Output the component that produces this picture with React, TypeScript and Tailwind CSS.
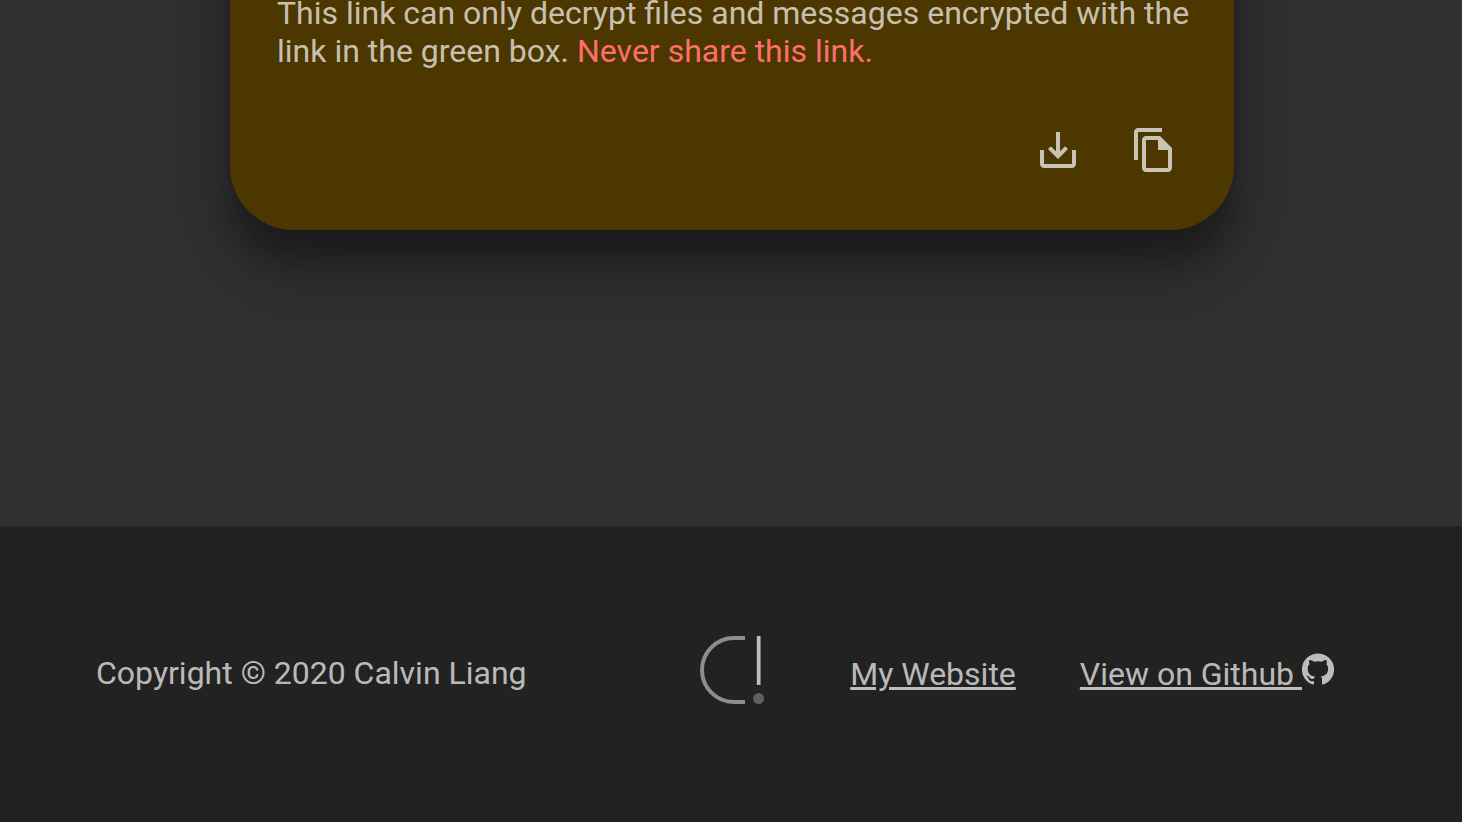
import React from "react";

function SaveIcon() {
  return (
    <svg viewBox="0 0 24 24" className="size-12 fill-current" aria-hidden="true">
      <path d="M19 12v7H5v-7H3v7c0 1.1.9 2 2 2h14c1.1 0 2-.9 2-2v-7h-2zm-6 .67l2.59-2.58L17 11.5l-5 5-5-5 1.41-1.41L11 12.67V3h2z" />
    </svg>
  );
}

function CopyIcon() {
  return (
    <svg viewBox="0 0 24 24" className="size-12 fill-current" aria-hidden="true">
      <path d="M16 1H4c-1.1 0-2 .9-2 2v14h2V3h12V1zm-1 4H8c-1.1 0-1.99.9-1.99 2L6 21c0 1.1.89 2 1.99 2H19c1.1 0 2-.9 2-2V11l-6-6zM8 21V7h6v5h5v9H8z" />
    </svg>
  );
}

function GithubIcon() {
  return (
    <svg viewBox="0 0 24 24" className="inline-block size-8 fill-current align-baseline" aria-hidden="true">
      <path d="M12 .3a12 12 0 0 0-3.8 23.4c.6.1.8-.3.8-.6v-2c-3.3.7-4-1.6-4-1.6-.6-1.4-1.4-1.8-1.4-1.8-1-.7.1-.7.1-.7 1.2 0 1.9 1.2 1.9 1.2 1 1.8 2.8 1.3 3.5 1 0-.8.4-1.3.7-1.6-2.7-.3-5.5-1.3-5.5-6 0-1.2.5-2.3 1.3-3.1-.2-.4-.6-1.6 0-3.2 0 0 1-.3 3.4 1.2a11.5 11.5 0 0 1 6 0c2.3-1.5 3.3-1.2 3.3-1.2.6 1.6.2 2.8 0 3.2.9.8 1.3 1.9 1.3 3.2 0 4.6-2.8 5.6-5.5 5.9.5.4.9 1 .9 2.2v3.3c0 .3.1.7.8.6A12 12 0 0 0 12 .3" />
    </svg>
  );
}

function Logo() {
  return (
    <svg viewBox="0 0 64 68" className="h-[68px] w-16" fill="none" aria-hidden="true">
      <path d="M45 2H34a32 32 0 0 0 0 64H45" stroke="#8e8e8e" strokeWidth="4" />
      <path d="M58.7 0V49" stroke="#bdbdbd" strokeWidth="3.7" />
      <circle cx="58.6" cy="62.5" r="5.5" fill="#5f5f5f" />
    </svg>
  );
}

export default function App() {
  return (
    <div className="flex min-h-screen flex-col overflow-hidden bg-[#303030] font-[Roboto,sans-serif] text-[32px] leading-[38px] text-white/70">
      <main className="pb-[296px] pl-0.5">
        <section className="mx-auto -mt-48 max-w-[1004px] rounded-[64px] bg-[#4c3700] pt-[186px] pb-8 shadow-[0_38px_76px_rgba(0,0,0,0.3),0_30px_24px_rgba(0,0,0,0.22)]">
          <p className="pr-10 pl-[47px]">
            This link can only decrypt files and messages encrypted with the link in the green box.{" "}
            <span className="text-[#ff6e6e]">Never share this link.</span>
          </p>
          <div className="mt-8 flex justify-end px-8">
            <button type="button" aria-label="Download link" className="rounded-full p-6">
              <SaveIcon />
            </button>
            <button type="button" aria-label="Copy link" className="rounded-full p-6">
              <CopyIcon />
            </button>
          </div>
        </section>
      </main>
      <footer className="grid flex-1 grid-cols-[1fr_auto_1fr] items-center bg-[#222222] pr-[94px] pb-2 pl-24">
        <p className="pt-1.5">Copyright © 2020 Calvin Liang</p>
        <Logo />
        <nav className="flex items-baseline justify-end gap-16 pt-1.5 pr-[34px]">
          <a href="#website" className="underline">
            My Website
          </a>
          <a href="#github" className="underline">
            View on Github <GithubIcon />
          </a>
        </nav>
      </footer>
    </div>
  );
}
